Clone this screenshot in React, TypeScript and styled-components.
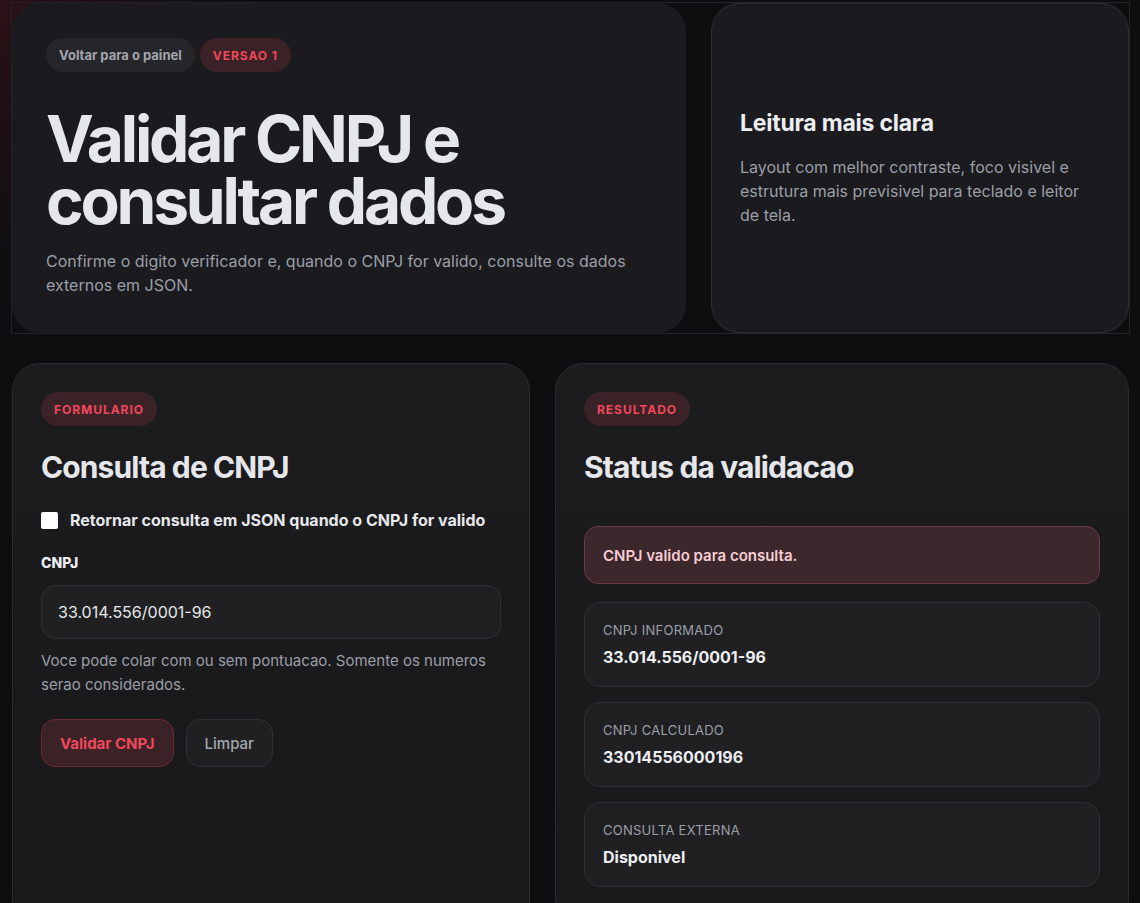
import React from 'react'
import styled, {createGlobalStyle} from 'styled-components'

const GlobalStyle = createGlobalStyle`
  * { box-sizing: border-box; }
  html { scrollbar-width: none; }
  html::-webkit-scrollbar { display: none; }
  body {
    margin: 0;
    background: radial-gradient(circle at 0 0, #2a1117 0, #0e0e11 260px), #0e0e11;
    background-color: #0e0e11;
    color: #e6e7eb;
    font-family: Inter, "Noto Sans", sans-serif;
  }
`

const Page = styled.main`
  padding: 3px 11px 0 12px;
  display: flex;
  flex-direction: column;
  gap: 30px;
`

const Hero = styled.header`
  display: grid;
  grid-template-columns: 674fr 418fr;
  gap: 25px;
  outline: 1px solid #232328;
`

const HeroCard = styled.section`
  background: #1b1b1f;
  border-radius: 28px;
  padding: 35px 34px 34px;
  min-height: 330px;
`

const AsideCard = styled.aside`
  background: #1b1b1f;
  border: 1px solid #2e2e33;
  border-radius: 28px;
  padding: 0 28px;
  display: flex;
  flex-direction: column;
  justify-content: center;
`

const PillRow = styled.div`
  display: flex;
  gap: 5px;
`

const Pill = styled.span<{$accent?: boolean}>`
  display: inline-flex;
  align-items: center;
  height: 34px;
  padding: 0 13px;
  border-radius: 17px;
  font-size: ${p => (p.$accent ? '12px' : '13px')};
  font-weight: 700;
  letter-spacing: ${p => (p.$accent ? '0.08em' : '0')};
  background: ${p => (p.$accent ? '#3b2227' : '#26262a')};
  color: ${p => (p.$accent ? '#f0475b' : '#a2a5ad')};
`

const Title = styled.h1`
  margin: 36px 0 0;
  font-size: 64px;
  line-height: 62px;
  font-weight: 700;
  letter-spacing: -0.05em;
  color: #e6e7eb;
`

const Lead = styled.p`
  margin: 17px 0 0;
  max-width: 610px;
  font-size: 16px;
  line-height: 24px;
  color: #9a9ea7;
`

const AsideTitle = styled.h2`
  margin: 0 0 18px;
  font-size: 23px;
  font-weight: 700;
  letter-spacing: -0.01em;
  color: #eceef1;
`

const AsideText = styled.p`
  margin: 0;
  font-size: 16px;
  line-height: 24px;
  color: #9a9ea7;
`

const Columns = styled.div`
  display: grid;
  grid-template-columns: 518fr 574fr;
  gap: 25px;
`

const Panel = styled.section`
  background: linear-gradient(180deg, #1c1c1f, #19191c);
  border: 1px solid #2b2b30;
  border-radius: 28px;
  padding: 28px 28px 40px;
  min-height: 560px;
`

const PanelTitle = styled.h2`
  margin: 22px 0 0;
  font-size: 30px;
  line-height: 38px;
  font-weight: 700;
  letter-spacing: -0.03em;
  color: #e6e7eb;
`

const CheckRow = styled.label`
  display: flex;
  align-items: center;
  gap: 12px;
  margin-top: 24px;
  font-size: 16px;
  font-weight: 700;
  color: #e6e7eb;

  > span.box {
    width: 17px;
    height: 17px;
    border-radius: 2px;
    background: #fff;
    flex: none;
  }
`

const FieldLabel = styled.div`
  margin-top: 24px;
  font-size: 14px;
  font-weight: 800;
  color: #eceef1;
`

const Input = styled.div`
  margin-top: 14px;
  height: 54px;
  border: 1px solid #2f2f34;
  border-radius: 14px;
  background: #202023;
  display: flex;
  align-items: center;
  padding: 0 16px;
  font-size: 16px;
  color: #e6e7eb;
`

const Hint = styled.p`
  margin: 10px 0 0;
  font-size: 15px;
  line-height: 24px;
  color: #9a9ea7;
`

const Actions = styled.div`
  display: flex;
  gap: 12px;
  margin-top: 22px;
`

const Button = styled.button<{$primary?: boolean}>`
  height: 48px;
  padding: 0 18px;
  border-radius: 14px;
  font-family: inherit;
  font-size: 15px;
  font-weight: ${p => (p.$primary ? 700 : 500)};
  border: 1px solid ${p => (p.$primary ? '#6b2a34' : '#303035')};
  background: ${p => (p.$primary ? '#3b2227' : '#202023')};
  color: ${p => (p.$primary ? '#f0475b' : '#a4a7ae')};
`

const Alert = styled.div`
  margin-top: 40px;
  height: 58px;
  display: flex;
  align-items: center;
  padding: 0 18px;
  border: 1px solid #6a3a43;
  border-radius: 14px;
  background: #3c272c;
  color: #f6cdd3;
  font-size: 15px;
  font-weight: 600;
`

const InfoList = styled.div`
  display: flex;
  flex-direction: column;
  gap: 15px;
  margin-top: 18px;
`

const InfoBox = styled.div`
  height: 85px;
  border: 1px solid #2e2e33;
  border-radius: 16px;
  background: #202023;
  padding: 19px 18px 0;

  > span {
    display: block;
    font-size: 13px;
    letter-spacing: 0.02em;
    color: #9a9ea7;
  }

  > strong {
    display: block;
    margin-top: 9px;
    font-size: 16px;
    font-weight: 700;
    color: #eceef1;
  }
`

export default function App() {
  return (
    <>
      <GlobalStyle/>
      <Page>
        <Hero>
          <HeroCard>
            <PillRow>
              <Pill>Voltar para o painel</Pill>
              <Pill $accent>VERSAO 1</Pill>
            </PillRow>
            <Title>Validar CNPJ e<br/>consultar dados</Title>
            <Lead>
              Confirme o digito verificador e, quando o CNPJ for valido, consulte os dados externos em JSON.
            </Lead>
          </HeroCard>
          <AsideCard>
            <AsideTitle>Leitura mais clara</AsideTitle>
            <AsideText>
              Layout com melhor contraste, foco visivel e estrutura mais previsivel para teclado e leitor de tela.
            </AsideText>
          </AsideCard>
        </Hero>
        <Columns>
          <Panel>
            <Pill $accent>FORMULARIO</Pill>
            <PanelTitle>Consulta de CNPJ</PanelTitle>
            <CheckRow>
              <span className="box"/>
              Retornar consulta em JSON quando o CNPJ for valido
            </CheckRow>
            <FieldLabel>CNPJ</FieldLabel>
            <Input>33.014.556/0001-96</Input>
            <Hint>Voce pode colar com ou sem pontuacao. Somente os numeros serao considerados.</Hint>
            <Actions>
              <Button $primary>Validar CNPJ</Button>
              <Button>Limpar</Button>
            </Actions>
          </Panel>
          <Panel>
            <Pill $accent>RESULTADO</Pill>
            <PanelTitle>Status da validacao</PanelTitle>
            <Alert>CNPJ valido para consulta.</Alert>
            <InfoList>
              <InfoBox>
                <span>CNPJ INFORMADO</span>
                <strong>33.014.556/0001-96</strong>
              </InfoBox>
              <InfoBox>
                <span>CNPJ CALCULADO</span>
                <strong>33014556000196</strong>
              </InfoBox>
              <InfoBox>
                <span>CONSULTA EXTERNA</span>
                <strong>Disponivel</strong>
              </InfoBox>
            </InfoList>
          </Panel>
        </Columns>
      </Page>
    </>
  )
}
